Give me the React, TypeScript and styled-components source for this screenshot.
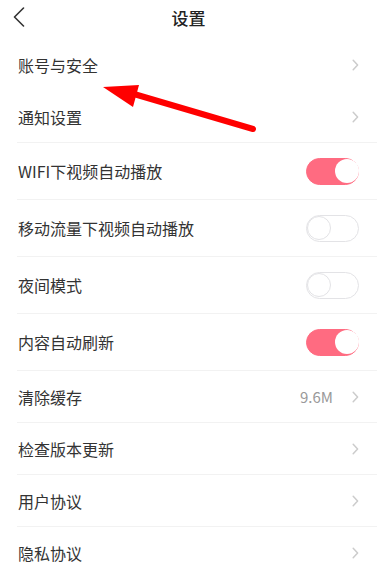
import React, { useState } from "react";
import styled, { createGlobalStyle } from "styled-components";

const GlobalStyle = createGlobalStyle`
  html, body {
    margin: 0;
    padding: 0;
    background: #ffffff;
  }
  body {
    font-family: "Noto Sans CJK SC", "Noto Sans", sans-serif;
    color: #333333;
  }
`;

type Item =
  | { kind: "link"; label: string; value?: string; divider: boolean }
  | { kind: "toggle"; label: string; on: boolean; divider: boolean };

const items: Item[] = [
  { kind: "link", label: "账号与安全", divider: false },
  { kind: "link", label: "通知设置", divider: false },
  { kind: "toggle", label: "WIFI下视频自动播放", on: true, divider: true },
  { kind: "toggle", label: "移动流量下视频自动播放", on: false, divider: true },
  { kind: "toggle", label: "夜间模式", on: false, divider: true },
  { kind: "toggle", label: "内容自动刷新", on: true, divider: true },
  { kind: "link", label: "清除缓存", value: "9.6M", divider: true },
  { kind: "link", label: "检查版本更新", divider: true },
  { kind: "link", label: "用户协议", divider: true },
  { kind: "link", label: "隐私协议", divider: true },
];

const App: React.FC = () => {
  const [toggles, setToggles] = useState<Record<string, boolean>>(() => {
    const init: Record<string, boolean> = {};
    items.forEach((it) => {
      if (it.kind === "toggle") init[it.label] = it.on;
    });
    return init;
  });

  return (
    <Page>
      <GlobalStyle />
      <Header>
        <BackButton aria-label="返回">
          <svg width="12" height="20" viewBox="0 0 12 20">
            <path
              d="M10.5 1 L1.5 10 L10.5 19"
              fill="none"
              stroke="#333"
              strokeWidth="1.6"
              strokeLinecap="round"
              strokeLinejoin="round"
            />
          </svg>
        </BackButton>
        <Title>设置</Title>
      </Header>

      <List>
        {items.map((it) => (
          <Row key={it.label} tall={it.kind === "toggle"} divider={it.divider}>
            <Label>{it.label}</Label>
            {it.kind === "toggle" ? (
              <Switch
                on={toggles[it.label]}
                onClick={() =>
                  setToggles((t) => ({ ...t, [it.label]: !t[it.label] }))
                }
              >
                <Knob on={toggles[it.label]} />
              </Switch>
            ) : (
              <Right>
                {it.value && <Value>{it.value}</Value>}
                <svg width="7" height="12" viewBox="0 0 7 12">
                  <path
                    d="M1.2 1.2 L5.6 6 L1.2 10.8"
                    fill="none"
                    stroke="#cccccc"
                    strokeWidth="1.5"
                    strokeLinecap="round"
                    strokeLinejoin="round"
                  />
                </svg>
              </Right>
            )}
          </Row>
        ))}
      </List>

      <Annotation width="377" height="576" viewBox="0 0 377 576">
        <line
          x1="253"
          y1="129"
          x2="134"
          y2="94"
          stroke="#ff0000"
          strokeWidth="6"
          strokeLinecap="round"
        />
        <polygon points="103,87 139,85 133,107" fill="#ff0000" />
      </Annotation>
    </Page>
  );
};

const Page = styled.div`
  position: relative;
  width: 377px;
  height: 576px;
  overflow: hidden;
  background: #ffffff;
`;

const Header = styled.div`
  height: 38px;
  display: flex;
  align-items: center;
  justify-content: center;
  position: relative;
`;

const BackButton = styled.button`
  position: absolute;
  left: 13px;
  top: 7px;
  border: none;
  background: none;
  padding: 0;
  display: flex;
`;

const Title = styled.div`
  font-size: 17px;
  font-weight: 500;
  color: #222222;
  line-height: 1;
  margin-top: -3px;
`;

const List = styled.div`
  display: flex;
  flex-direction: column;
`;

const Row = styled.div<{ tall: boolean; divider: boolean }>`
  height: ${(p) => (p.tall ? 57 : 52)}px;
  margin-left: 17px;
  padding: 0 18px 0 1px;
  display: flex;
  align-items: center;
  justify-content: space-between;
  border-top: 1px solid ${(p) => (p.divider ? "#f2f2f2" : "transparent")};
  box-sizing: border-box;
`;

const Label = styled.span`
  font-size: 16px;
  color: #333333;
  line-height: 1;
`;

const Right = styled.div`
  display: flex;
  align-items: center;
  gap: 19px;
`;

const Value = styled.span`
  font-size: 15px;
  color: #999999;
`;

const Switch = styled.div<{ on: boolean }>`
  width: 53px;
  height: 27px;
  box-sizing: border-box;
  border-radius: 14px;
  border: 1.5px solid ${(p) => (p.on ? "#ff6b81" : "#e3e3e6")};
  background: ${(p) => (p.on ? "#ff6b81" : "#ffffff")};
  display: flex;
  align-items: center;
  justify-content: ${(p) => (p.on ? "flex-end" : "flex-start")};
  cursor: pointer;
`;

const Knob = styled.div<{ on: boolean }>`
  width: 24px;
  height: 24px;
  border-radius: 50%;
  background: #ffffff;
  box-sizing: border-box;
  border: ${(p) => (p.on ? "none" : "1.5px solid #e3e3e6")};
  margin: ${(p) => (p.on ? "0 -0.5px 0 0" : "0 0 0 -0.5px")};
`;

const Annotation = styled.svg`
  position: absolute;
  left: 0;
  top: 0;
  pointer-events: none;
`;

export default App;
